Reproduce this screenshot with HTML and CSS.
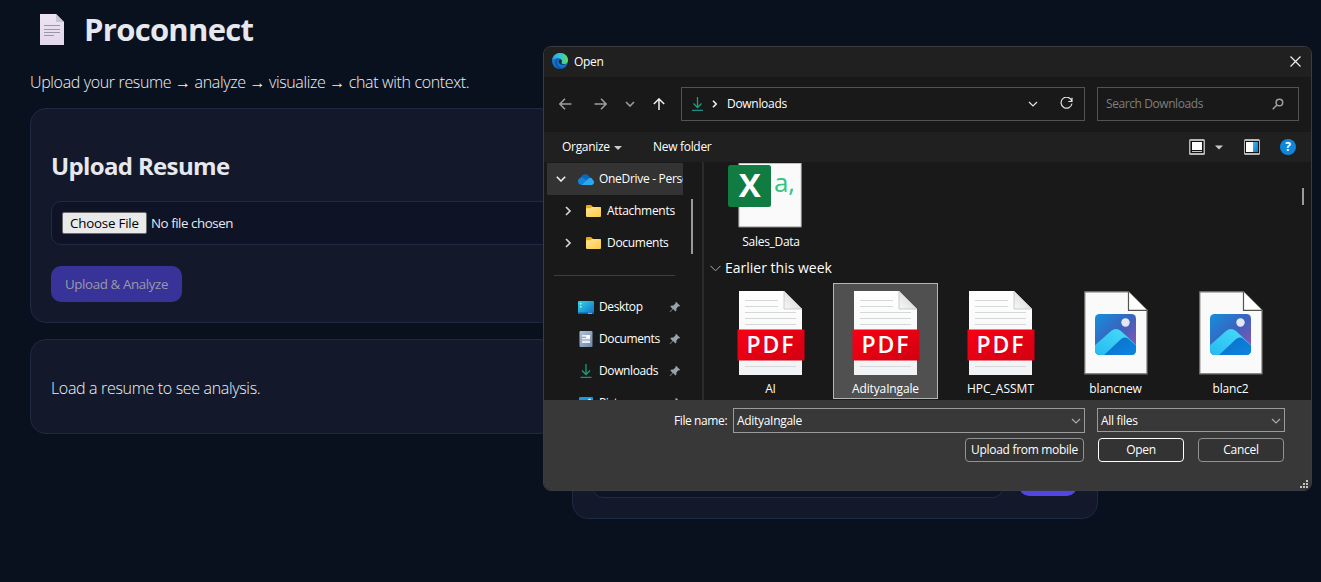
FILE: index.html
```html
<!DOCTYPE html>
<html lang="en">
<head>
<meta charset="utf-8">
<title>Proconnect</title>
<link rel="stylesheet" href="styles.css">
</head>
<body>
<svg class="defs" width="0" height="0" aria-hidden="true">
  <defs>
    <linearGradient id="g-red" x1="0" y1="0" x2="1" y2="1"><stop offset="0" stop-color="#f80014"/><stop offset="1" stop-color="#d20012"/></linearGradient>
    <linearGradient id="g-page" x1="0" y1="0" x2="0" y2="1"><stop offset="0" stop-color="#fff"/><stop offset="1" stop-color="#f1f2f4"/></linearGradient>
    <linearGradient id="g-fold" x1="0" y1="1" x2="1" y2="0"><stop offset="0" stop-color="#f8f8f8"/><stop offset="1" stop-color="#cfcfd1"/></linearGradient>
    <linearGradient id="g-sky" x1="0" y1="0" x2="1" y2="1"><stop offset="0" stop-color="#148fdd"/><stop offset=".5" stop-color="#3b62bd"/><stop offset="1" stop-color="#a04fb0"/></linearGradient>
    <linearGradient id="g-hill" x1="0" y1="1" x2="1" y2="0"><stop offset="0" stop-color="#22b5ee"/><stop offset="1" stop-color="#4be0fb"/></linearGradient>
    <linearGradient id="g-hill2" x1="0" y1="0" x2="1" y2="1"><stop offset="0" stop-color="#0d6cc6"/><stop offset="1" stop-color="#0a8be6"/></linearGradient>
    <linearGradient id="g-folder" x1="0" y1="0" x2="1" y2="1"><stop offset="0" stop-color="#ffe69a"/><stop offset="1" stop-color="#fdc93f"/></linearGradient>
    <linearGradient id="g-desk" x1="0" y1="0" x2="1" y2="1"><stop offset="0" stop-color="#35d6e4"/><stop offset="1" stop-color="#0c6fc9"/></linearGradient>
    <linearGradient id="g-doc" x1="0" y1="0" x2="1" y2="1"><stop offset="0" stop-color="#b3c4d8"/><stop offset="1" stop-color="#6d87a6"/></linearGradient>
    <linearGradient id="g-edge" x1="0" y1="0" x2="1" y2="0"><stop offset="0" stop-color="#2aa5e4"/><stop offset=".55" stop-color="#32c8cf"/><stop offset="1" stop-color="#62dd55"/></linearGradient>
    <linearGradient id="g-note" x1="0" y1="0" x2="0" y2="1"><stop offset="0" stop-color="#ece4f3"/><stop offset="1" stop-color="#e2d7ec"/></linearGradient>
    <linearGradient id="g-pane" x1="0" y1="0" x2="1" y2="1"><stop offset="0" stop-color="#3cb8ee"/><stop offset="1" stop-color="#0a78d2"/></linearGradient>
    <symbol id="pdf" viewBox="0 0 68 86">
      <path d="M2 1h45l18 18v66H2z" fill="url(#g-page)"/>
      <path d="M47 1v18h18z" fill="url(#g-fold)" stroke="#b9b9bb" stroke-width=".7"/>
      <path d="M8 10.500h33M8 16.500h33M8 22.500h51M8 28.500h51M8 34.500h51M8 76.500h51" stroke="#d6d7d9" fill="none"/>
      <rect x=".5" y="39.500" width="67" height="31" fill="url(#g-red)"/>
    </symbol>
    <symbol id="image" viewBox="0 0 64 84">
      <path d="M.8.8h43.700l18.500 18.500v63.500H.8z" fill="#fafafa" stroke="#77766f" stroke-width="1.200"/>
      <path d="M44.500.8v18.500H63" fill="#fff" stroke="#55544f" stroke-width="1.200"/>
      <clipPath id="pic"><rect x="11" y="23" width="41" height="41" rx="4.500"/></clipPath>
      <g clip-path="url(#pic)">
        <rect x="11" y="23" width="41" height="41" fill="url(#g-sky)"/>
        <path d="M8 57l19-17q5-4 10 0l17 16v12H8z" fill="url(#g-hill)"/>
        <path d="M19 65l17-16q4-4 8-1.500L56 58v10H18z" fill="url(#g-hill2)"/>
      </g>
      <circle cx="41.500" cy="31.500" r="4.200" fill="#e4e7f1"/>
    </symbol>
    <symbol id="folder" viewBox="0 0 15 12"><path d="M0 1q0-1 1-1h4l2 2h7q1 0 1 1v3H0z" fill="#eda915"/><path d="M0 4.200q0-1 1-1h3l2-1.200h8q1 0 1 1v8q0 1-1 1H1q-1 0-1-1z" fill="url(#g-folder)"/></symbol>
    <symbol id="pin" viewBox="0 0 12 12"><path d="M7 .7l4.300 4.200-1.200.5-.7-.1-2 2.200.1 1.800-1 1.200-2.400-2.400L1 11.300.5 11l3-3.200L1.300 5.500l1.200-1 1.900.1 2.100-2-.1-.8z" fill="#9aa4ac"/></symbol>
    <symbol id="down" viewBox="0 0 13 14"><path d="M6.500 0v10.500M2.500 6.500l4 4 4-4" fill="none" stroke="#1d9f7a" stroke-width="1.300"/><path d="M1 13.300h11" stroke="#1a8f86" stroke-width="1.200"/></symbol>
    <symbol id="right" viewBox="0 0 8 10"><path d="M2 1l4 4-4 4" fill="none" stroke="#d5d5d5" stroke-width="1.700"/></symbol>
    <symbol id="chev" viewBox="0 0 10 6"><path d="M1 1l4 4 4-4" fill="none" stroke="currentColor" stroke-width="1.200"/></symbol>
  </defs>
</svg>

<main class="page">
  <h1 class="brand">
    <svg width="24" height="31" viewBox="0 0 24 31"><path d="M0 0h16l8 8v23H0z" fill="url(#g-note)"/><path d="M16 0v8h8z" fill="#cac4d0"/><path d="M4 11.500h16M4 15.500h16M4 18.500h16M4 21.500h10" stroke="#9c95a6"/></svg>
    <span>Proconnect</span>
  </h1>
  <p class="tagline">Upload your resume → analyze → visualize → chat with context.</p>
  <div class="grid">
    <div class="column">
      <section class="card upload">
        <h2>Upload Resume</h2>
        <div class="file-field"><span class="choose">Choose File</span><span class="none">No file chosen</span></div>
        <button class="analyze" disabled>Upload &amp; Analyze</button>
      </section>
      <section class="card analysis"><p>Load a resume to see analysis.</p></section>
    </div>
    <section class="card chat"><div class="chat-row"><div class="chat-input"></div><div class="send"></div></div></section>
  </div>
</main>

<div class="dialog">
  <header class="titlebar">
    <svg width="16" height="16" viewBox="0 0 16 16"><circle cx="8" cy="8" r="8" fill="#1273ce"/><path d="M.2 7C1 2.500 4.300 0 8 0c5 0 8 3.500 8 7 0 2.500-1.800 4-4 4-1.800 0-3-.8-2.500-1.500C11 7.500 9 5 6 5 3.500 5 1.200 6 .2 7z" fill="url(#g-edge)"/><path d="M6.500 5.500C4 7.500 4.500 13 8.500 14.500c2 .8 4.500 0 5.800-1.500A8 8 0 0 1 8 16C5 15 3 12 3.300 9c.2-2 1.500-3.300 3.200-3.500z" fill="#0b4f9f"/><path d="M8.500 6.300c-2 .2-2.500 2.500-1.200 4 1.500 1.800 4.700 2.200 7.200 1-1.500.3-5.800.2-5-1.800.7-1 .3-2.500-1-3.200z" fill="#1b2730"/></svg>
    <span class="title">Open</span>
    <svg class="close" width="11" height="11" viewBox="0 0 11 11"><path d="M.5.5l10 10M10.500.5l-10 10" stroke="#eee" stroke-width="1.200"/></svg>
  </header>

  <div class="nav">
    <div class="arrows">
      <svg width="13" height="12" viewBox="0 0 13 12"><path d="M12.500 6H1M6 .8L.9 6 6 11.200" fill="none" stroke="#9d9d9d" stroke-width="1.500"/></svg>
      <svg width="13" height="12" viewBox="0 0 13 12"><path d="M.5 6H12M7 .8L12.100 6 7 11.200" fill="none" stroke="#9d9d9d" stroke-width="1.500"/></svg>
      <svg class="recent" width="10" height="6" viewBox="0 0 10 6"><path d="M1 1l4 4 4-4" fill="none" stroke="#9d9d9d" stroke-width="1.600"/></svg>
      <svg width="12" height="12" viewBox="0 0 12 12"><path d="M6 12V1M.8 6L6 .9 11.200 6" fill="none" stroke="#eee" stroke-width="1.500"/></svg>
    </div>
    <div class="address">
      <svg width="13" height="14"><use href="#down"/></svg>
      <svg class="sep" width="6" height="8" viewBox="0 0 6 8"><path d="M1 .8L4.200 4 1 7.200" fill="none" stroke="#eee" stroke-width="1.600"/></svg>
      <span>Downloads</span>
      <svg class="drop" width="10" height="6"><use href="#chev"/></svg>
      <svg width="13" height="13" viewBox="0 0 13 13"><path d="M11.800 4A5.500 5.500 0 1 0 12 6.500M12 .8v3.700H8.300" fill="none" stroke="#e2e2e2" stroke-width="1.200"/></svg>
    </div>
    <div class="search"><span>Search Downloads</span><svg width="12" height="12" viewBox="0 0 12 12"><circle cx="7.400" cy="4.500" r="3.300" fill="none" stroke="#a0a0a0" stroke-width="1.500"/><path d="M5 7L.7 11.300" stroke="#a0a0a0" stroke-width="1.500"/></svg></div>
  </div>

  <div class="toolbar">
    <span class="organize">Organize</span>
    <svg class="caret" width="8" height="4" viewBox="0 0 8 4"><path d="M0 0h8L4 4z" fill="#ccc"/></svg>
    <span>New folder</span>
    <div class="views">
      <svg width="16" height="16" viewBox="0 0 16 16"><rect width="16" height="16" rx="1.500" fill="#b9b6b6"/><rect x="1.500" y="2" width="13" height="12" fill="#111"/><path d="M3 3h10v8H3zM3 12.300h10v.7H3z" fill="#fff"/></svg>
      <svg class="v-caret" width="8" height="5" viewBox="0 0 8 5"><path d="M0 .5h8l-4 4z" fill="#ccc"/></svg>
      <svg class="v-pane" width="16" height="16" viewBox="0 0 16 16"><rect width="16" height="16" rx="1.500" fill="#b9b6b6"/><rect x="1" y="2" width="14" height="12" fill="#111"/><path d="M2 3h7v10H2z" fill="#fff"/><path d="M9 3h5v10H9z" fill="url(#g-pane)"/></svg>
      <span class="help">?</span>
    </div>
  </div>

  <div class="body">
    <aside class="tree">
      <div class="tree-list">
        <div class="node root"><svg class="tw" width="10" height="6" viewBox="0 0 10 6"><path d="M.8.8L5 5 9.200.8" fill="none" stroke="#eee" stroke-width="1.600"/></svg>
          <svg width="16" height="11" viewBox="0 0 16 11"><path d="M3.500 10.500A3.500 3.500 0 0 1 2.800 3.800C4-.6 9.500-1 11.500 3L10 9z" fill="#0868bd"/><path d="M.2 6c.8-2 2.800-3 4.900-2.100L10.500 7 5 10.800H3C1 10.500-.4 8.500.2 6z" fill="#1383d8"/><path d="M4 10.800L9.500 5.500c2.500-3.200 5-1.600 5.300.6 2 1 1.500 4.700-1.300 4.900H4z" fill="#2ba9ee"/></svg><span>OneDrive - Personal</span></div>
        <div class="node child"><svg width="8" height="10"><use href="#right"/></svg><svg width="15" height="12"><use href="#folder"/></svg><span>Attachments</span></div>
        <div class="node child"><svg width="8" height="10"><use href="#right"/></svg><svg width="15" height="12"><use href="#folder"/></svg><span>Documents</span></div>
        <div class="divider"></div>
        <div class="node place"><svg width="16" height="13" viewBox="0 0 16 13"><rect width="16" height="13" rx="1" fill="url(#g-desk)"/><path d="M2 2h1.500v1.500H2zM2 5h1.500v1.500H2z" fill="#a7f3f5"/><path d="M0 11.500h16V12q0 1-1 1H1q-1 0-1-1z" fill="#0b5ca8"/><path d="M10 12.300h4" stroke="#7cc6ee"/></svg><span>Desktop</span><svg class="pin" width="12" height="12"><use href="#pin"/></svg></div>
        <div class="node place"><svg width="16" height="16" viewBox="0 0 16 16"><rect x="1.500" width="13" height="16" rx="1" fill="url(#g-doc)"/><path d="M4 4h8v8H4z" fill="#e8eef4"/><path d="M4 6.300h4M4 9h8" stroke="#7c94b0"/><path d="M9 4h3v3H9z" fill="#fff"/></svg><span>Documents</span><svg class="pin" width="12" height="12"><use href="#pin"/></svg></div>
        <div class="node place"><svg width="16" height="14" viewBox="-1 0 15 14"><use href="#down" width="13" height="14"/></svg><span>Downloads</span><svg class="pin" width="12" height="12"><use href="#pin"/></svg></div>
        <div class="node place"><svg width="16" height="13" viewBox="0 0 16 13"><rect x="1" width="14" height="13" rx="1" fill="#159be5"/><path d="M2 13l6-7 6 7z" fill="#bdeafc"/><circle cx="11.500" cy="3" r="1.300" fill="#fff"/></svg><span>Pictures</span><svg class="pin" width="12" height="12"><use href="#pin"/></svg></div>
      </div>
      <div class="tree-scroll"></div>
    </aside>
    <div class="files">
      <div class="sales">
        <svg width="75" height="65" viewBox="0 0 75 65"><path d="M10.800 0h62.500v64H10.800z" fill="#fafafa" stroke="#8a8a8a"/><rect width="43" height="42" y="2" rx="2.500" fill="#107c41"/><text x="21.500" y="34" text-anchor="middle" class="xl">X</text><text x="46" y="29" class="csv">a,</text></svg>
        <span>Sales_Data</span>
      </div>
      <div class="group"><svg width="11" height="7" viewBox="0 0 11 7"><path d="M.5.8l5 5 5-5" fill="none" stroke="#aaa"/></svg><span>Earlier this week</span></div>
      <div class="icons">
        <div class="file"><svg width="68" height="86"><use href="#pdf"/><text x="34" y="63" class="pdf-text">PDF</text></svg><span>AI</span></div>
        <div class="file selected"><svg width="68" height="86"><use href="#pdf"/><text x="34" y="63" class="pdf-text">PDF</text></svg><span>AdityaIngale</span></div>
        <div class="file"><svg width="68" height="86"><use href="#pdf"/><text x="34" y="63" class="pdf-text">PDF</text></svg><span class="caps">HPC_ASSMT</span></div>
        <div class="file img"><svg width="64" height="84"><use href="#image"/></svg><span>blancnew</span></div>
        <div class="file img"><svg width="64" height="84"><use href="#image"/></svg><span>blanc2</span></div>
      </div>
      <div class="files-scroll"></div>
    </div>
  </div>

  <footer class="foot">
    <div class="row">
      <label>File name:</label>
      <div class="combo name"><span>AdityaIngale</span><svg width="10" height="6"><use href="#chev"/></svg></div>
      <div class="combo type"><span>All files</span><svg width="10" height="6"><use href="#chev"/></svg></div>
    </div>
    <div class="row actions">
      <div class="btn mobile">Upload from mobile</div>
      <div class="btn open">Open</div>
      <div class="btn cancel">Cancel</div>
    </div>
    <svg class="grip" width="8" height="8" viewBox="0 0 8 8"><path d="M6 0h2v2H6zM3 3h2v2H3zM6 3h2v2H6zM0 6h2v2H0zM3 6h2v2H3zM6 6h2v2H6z" fill="#c6c3bd"/></svg>
  </footer>
</div>
</body>
</html>
```
FILE: styles.css
```css
* { box-sizing: border-box; }
html, body { height: 100%; }
body { margin: 0; overflow: hidden; background: #0a111e; color: #e6e8ef; font-family: "Open Sans", "Noto Sans", sans-serif; font-size: 16px; }
svg { display: block; flex: none; }
.defs { position: absolute; }
h1, h2, p { margin: 0; }
span, label { white-space: nowrap; }

.page { padding: 7px 30px 0; width: 1128px; }
.brand { display: flex; align-items: center; height: 44px; padding-left: 10px; gap: 20px; font-size: 31px; font-weight: 700; line-height: 44px; letter-spacing: -0.7px; }
.tagline { margin-top: 19px; height: 24px; line-height: 24px; font-weight: 300; letter-spacing: -0.35px; color: #f1f3f8; }
.grid { display: grid; grid-template-columns: 526px 526px; gap: 16px; margin-top: 14px; align-items: start; }
.column { display: flex; flex-direction: column; gap: 16px; }
.card { background: #13192b; border: 1px solid #1e2943; border-radius: 16px; padding: 20px; }
.upload { height: 215px; padding: 41px 0 20px 20px; }
.upload h2 { font-size: 24px; line-height: 32px; font-weight: 700; letter-spacing: -0.65px; }
.file-field { display: flex; align-items: center; height: 44px; margin-top: 19px; padding: 0 10px; border: 1px solid #1f2a47; border-radius: 10px; background: #0e1426; font-size: 13.333px; }
.choose { width: 85px; height: 22px; line-height: 20px; padding: 0 7px; border: 1px solid #6b6b6b; border-radius: 2px; background: #e9e9e9; color: #000; letter-spacing: -0.2px; }
.none { margin-left: 4px; letter-spacing: -0.45px; }
.analyze { display: block; width: 131px; height: 36px; margin-top: 21px; padding: 0; border: 0; border-radius: 10px; background: #383399; color: #9a9aa5; font-family: inherit; font-size: 13.333px; letter-spacing: -0.38px; }
.analysis { height: 95px; padding-top: 36px; line-height: 24px; font-weight: 300; letter-spacing: -0.33px; color: #f1f3f8; }
.chat { height: 411px; display: flex; align-items: flex-end; padding-bottom: 20px; }
.chat-row { display: flex; gap: 16px; align-items: center; }
.chat-input { width: 410px; height: 42px; border: 1px solid #1f2a47; border-radius: 10px; background: #0e1426; }
.send { width: 58px; height: 38px; border-radius: 10px; background: #4f46e5; }

/* The file picker floats over the page */
.dialog { position: absolute; left: 543px; top: 46px; width: 769px; height: 445px; display: flex; flex-direction: column; border: 1px solid #3b3c42; border-radius: 8px; background: #191919; color: #fff; overflow: hidden; font-size: 12px; line-height: 16px; letter-spacing: -0.3px; }
.titlebar { display: flex; align-items: center; height: 30px; padding: 0 10px 2px 8px; background: #202020; gap: 6px; }
.title { padding-top: 2px; }
.close { margin-left: auto; }
.nav { display: flex; align-items: center; height: 55px; padding-bottom: 2px; }
.arrows { display: flex; align-items: center; width: 137px; padding-left: 15px; }
.arrows svg + svg { margin-left: 22px; }
.arrows .recent { margin-left: 18px; }
.arrows .recent + svg { margin-left: 18px; }
.address { display: flex; align-items: center; width: 404px; height: 34px; padding: 0 11px 0 9px; border: 1px solid #535353; }
.sep { margin: 0 9px 0 8px; }
.drop { margin: 0 22px 0 auto; color: #e2e2e2; }
.search { display: flex; align-items: center; justify-content: space-between; width: 202px; height: 34px; margin-left: 12px; padding: 0 14px 0 8px; border: 1px solid #535353; color: #7f7f7f; letter-spacing: -0.42px; }
.toolbar { display: flex; align-items: center; height: 30px; padding: 0 15px 0 18px; background: #202020; }
.organize { width: 47px; }
.caret { margin: 1px 31px 0 5px; }
.views { display: flex; align-items: center; margin-left: auto; }
.v-caret { margin: 0 21px 0 10px; }
.v-pane { margin-right: 20px; }
.help { width: 16px; height: 16px; border-radius: 50%; background: #0e86dc; font-weight: 700; text-align: center; }
.body { display: flex; height: 238px; overflow: hidden; }
.tree { display: flex; width: 160px; height: 238px; border-right: 2px solid #2b2b2b; }
.tree-list { width: 136px; height: 237px; margin: 1px 8px 0 3px; overflow: hidden; }
.node { display: flex; align-items: center; height: 32px; flex: none; }
.root { height: 32px; padding-left: 9px; background: #333; overflow: hidden; }
.root .tw { margin-right: 12px; }
.root span { margin-left: 5px; }
.child { padding-left: 17px; }
.child svg + svg { margin-left: 14px; }
.child span { margin-left: 6px; }
.divider { height: 1px; margin: 16px 8px 15px 7px; background: #3d3d3d; }
.place { padding-left: 31px; letter-spacing: -0.38px; }
.place span { margin-left: 5px; }
.place .pin { margin: 0 2px 0 auto; }
.tree-scroll { width: 2px; height: 55px; margin-top: 37px; background: #9a9a9a; }
.files { position: relative; flex: 1; padding-left: 6px; overflow: hidden; }
.sales { display: flex; flex-direction: column; align-items: center; width: 110px; margin-left: 6px; padding-top: 1px; gap: 6px; }
.sales svg { margin-right: 12px; }
.xl { font-size: 33px; font-weight: 700; fill: #fff; }
.csv { font-size: 26px; fill: #33c481; }
.group { display: flex; align-items: center; gap: 4px; height: 20px; margin-top: 8px; font-size: 14px; letter-spacing: 0; }
.icons { display: flex; gap: 10px; margin: 5px 0 0 8px; }
.file { display: flex; flex-direction: column; align-items: center; width: 105px; height: 116px; padding-top: 6px; border: 1px solid transparent; gap: 5px; }
.file span { letter-spacing: -0.15px; }
.file .caps { letter-spacing: 0; }
.img { padding-top: 7px; gap: 6px; }
.selected { background: #505050; border-color: #b5b5b5; }
.pdf-text { font-size: 23px; font-weight: 600; fill: #fff; letter-spacing: 2px; text-anchor: middle; }
.files-scroll { position: absolute; right: 7px; top: 26px; width: 2px; height: 17px; background: #9a9a9a; }
.foot { position: relative; flex: 1; background: #383838; padding-top: 8px; }
.row { display: flex; align-items: flex-start; padding-left: 130px; }
.row label { width: 59px; line-height: 26px; letter-spacing: -0.4px; }
.combo { display: flex; align-items: center; justify-content: space-between; padding: 1px 3px 0; border: 1px solid #9b9b9b; color: #fff; }
.combo svg { color: #aaa; }
.name { width: 352px; height: 25px; }
.type { width: 188px; height: 24px; margin-left: 12px; }
.actions { padding-left: 421px; margin-top: 4px; }
.btn { height: 24px; border: 1px solid #929292; border-radius: 4px; background: #333; text-align: center; line-height: 22px; white-space: nowrap; }
.mobile { width: 119px; }
.open { width: 86px; margin-left: 14px; border-color: #fff; }
.cancel { width: 86px; margin-left: 14px; }
.grip { position: absolute; right: 3px; bottom: 2px; }
```
